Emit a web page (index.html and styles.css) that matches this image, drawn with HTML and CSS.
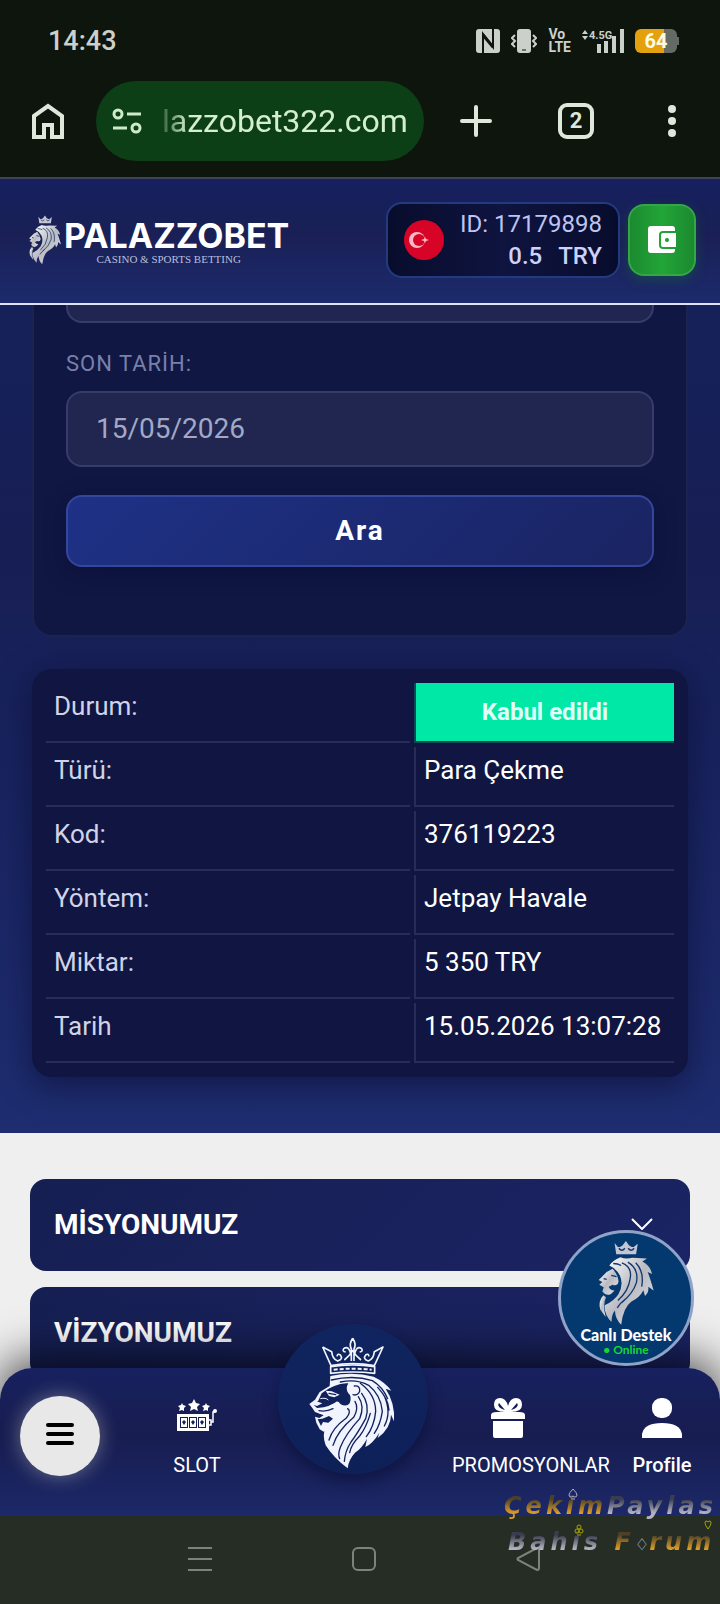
FILE: index.html
```
<!DOCTYPE html>
<html lang="tr">
<head>
    <meta charset="UTF-8">
    <meta name="viewport" content="width=device-width, initial-scale=1">
    <title>Palazzobet</title>
    <link rel="stylesheet" href="styles.css">
</head>
<body>
    <svg class="defs" aria-hidden="true">
        <defs>
            <linearGradient id="silver" x1="0" y1="0" x2="1" y2="1">
                <stop offset="0" stop-color="#ffffff"/>
                <stop offset="0.5" stop-color="#b9bac2"/>
                <stop offset="1" stop-color="#e8e8ee"/>
            </linearGradient>
        </defs>
        <symbol id="lion" viewBox="715 235 175 260">
            <path fill="#c3c6d2" d="M768 244l10 12 6 0 8-4 10-14 10 14 8 4 6 0 12-10-5 32h-60z"/>
            <path class="cut" d="M781 260q9 12 18 0M809 260q9 12 18 0"/>
            <path fill="url(#silver)" d="M752 312Q765 294 786 287Q800 294 822 289L866 291L852 300Q876 312 881 338L868 332Q876 352 886 388L870 376Q872 394 860 404L855 387Q845 408 818 422Q794 440 788 491Q770 474 769 448Q758 462 759 483Q736 460 738 432Q766 420 780 398Q796 370 784 342Q772 320 752 312Z"/>
            <path fill="url(#silver)" d="M762 322L744 332L720 356L731 362L722 370L735 378L731 391Q742 406 757 398L768 388Q754 386 750 376L762 370Q778 376 780 360Q778 340 762 322Z"/>
            <path fill="url(#silver)" d="M734 402Q717 420 725 446L741 468Q731 430 742 408Z"/>
            <path class="cut" d="M790 304Q822 316 815 352Q810 390 778 418M808 302Q842 322 834 364Q824 396 790 424M832 304Q858 330 850 376M776 440Q784 426 800 414M758 342L774 346M735 352L744 354M764 306Q778 306 788 312"/>
        </symbol>
    </svg>

    <!-- status bar -->
    <div class="status">
        <span class="clock">14:43</span>
        <div class="status-icons">
            <svg width="24" height="24" viewBox="0 0 24 24">
                <rect width="24" height="24" rx="3" fill="#ccd0cb"/>
                <path d="M7 24V5l10 13V0" fill="none" stroke="#0d150c" stroke-width="2"/>
                <path d="M7 6l10 12" stroke="#0d150c" stroke-width="3"/>
            </svg>
            <svg width="26" height="24" viewBox="0 0 26 24">
                <rect x="6" width="14" height="24" rx="3" fill="#ccd0cb"/>
                <path d="M11 21h4" stroke="#0d150c"/>
                <path d="M4 6L1 9l3 3-3 3 3 3M22 6l3 3-3 3 3 3-3 3" fill="none" stroke="#ccd0cb" stroke-width="2"/>
            </svg>
            <span class="volte">Vo<br>LTE</span>
            <svg class="signal" width="42" height="24" viewBox="0 0 42 24">
                <path d="M0 5l3-4 3 4zM0 7h6l-3 4zM15 15h4v9h-4zM22 12h4v12h-4zM30 7h4v17h-4zM38 0h4v24h-4z" fill="#ccd0cb"/>
                <text x="7" y="10">4.5G</text>
            </svg>
            <span class="battery">64</span>
        </div>
    </div>

    <!-- browser bar -->
    <div class="browser">
        <button class="home" aria-label="Ana sayfa">
            <svg width="32" height="36" viewBox="0 0 32 36"><path d="M2 13L16 3l14 10v21H20V22h-8v12H2z"/></svg>
        </button>
        <label class="address">
            <svg width="30" height="26" viewBox="0 0 30 26">
                <circle cx="6" cy="6" r="4"/><circle cx="24" cy="20" r="4"/>
                <path d="M15 6h14M1 20h14"/>
            </svg>
            <input type="text" value="lazzobet322.com" aria-label="Adres">
        </label>
        <button class="new-tab" aria-label="Yeni sekme">
            <svg width="32" height="32" viewBox="0 0 32 32"><path d="M16 2v28M2 16h28" stroke-linecap="round"/></svg>
        </button>
        <button aria-label="Sekmeler"><span class="tabs">2</span></button>
        <button aria-label="Menü">
            <svg class="dots" width="8" height="32" viewBox="0 0 8 32"><circle cx="4" cy="4" r="4"/><circle cx="4" cy="16" r="4"/><circle cx="4" cy="28" r="4"/></svg>
        </button>
    </div>

    <header class="header">
        <a href="#" class="logo">
            <svg width="34" height="50"><use href="#lion"/></svg>
            <span class="logo-text">
                <strong>PALAZZOBET</strong>
                <small>CASINO &amp; SPORTS BETTING</small>
            </span>
        </a>
        <div class="user">
            <svg width="40" height="40" viewBox="0 0 40 40">
                <circle cx="20" cy="20" r="20" fill="#d80428"/>
                <circle cx="13" cy="20" r="8" fill="#f7b9c6"/>
                <circle cx="15" cy="20" r="6" fill="#d80428"/>
                <path d="M17 20l3-1 1-2 1 2 3 1-3 1-1 2-1-2z" fill="#f7b9c6"/>
            </svg>
            <div class="user-info">
                <span>ID: 17179898</span>
                <b>0.5 <i>TRY</i></b>
            </div>
        </div>
        <button class="wallet" aria-label="Cüzdan">
            <svg width="28" height="28" viewBox="0 0 28 28">
                <path fill="#fff" d="M3 0h21q3 0 3 3v2H15q-4 0-4 4v10q0 4 4 4h12v1q0 3-3 3H3q-3 0-3-3V3q0-3 3-3z"/>
                <path fill="#fff" d="M15 7h13v14H15q-2 0-2-2V9q0-2 2-2z"/>
                <circle cx="19" cy="14" r="2" fill="#1f9a33"/>
            </svg>
        </button>
    </header>

    <main class="main">
        <form class="filter">
            <input type="text" aria-label="Başlangıç tarihi">
            <label for="end">SON TARİH:</label>
            <input type="text" id="end" value="15/05/2026">
            <button type="button">Ara</button>
        </form>
        <div class="result">
            <table>
                <tr><th>Durum:</th><td class="ok">Kabul edildi</td></tr>
                <tr><th>Türü:</th><td>Para Çekme</td></tr>
                <tr><th>Kod:</th><td>376119223</td></tr>
                <tr><th>Yöntem:</th><td>Jetpay Havale</td></tr>
                <tr><th>Miktar:</th><td>5 350 TRY</td></tr>
                <tr><th>Tarih</th><td>15.05.2026 13:07:28</td></tr>
            </table>
        </div>
    </main>

    <section class="about">
        <button class="fold">MİSYONUMUZ
            <svg width="22" height="12" viewBox="0 0 22 12"><path d="M1 1l10 10L21 1"/></svg>
        </button>
        <button class="fold">VİZYONUMUZ</button>
        <a href="#" class="support">
            <svg width="58" height="86"><use href="#lion"/></svg>
            <b>Canlı Destek</b>
            <span>• Online</span>
        </a>
    </section>

    <nav class="nav">
        <button class="menu" aria-label="Menü">
            <svg width="28" height="22" viewBox="0 0 28 22"><path d="M2 2h24M2 11h24M2 20h24"/></svg>
        </button>
        <a href="#" class="item">
            <svg width="40" height="40" viewBox="3 0 40 40">
                <path d="M20 1l2 4 4 1-3 3 1 4-4-2-4 2 1-4-3-3 4-1zM8 5l1 2 3 1-2 2v3l-2-1-3 1 1-3-2-2 3-1zM32 5l1 2 3 1-2 2v3l-2-1-3 1 1-3-2-2 3-1z"/>
                <path fill-rule="evenodd" d="M3 16h32v17H3zM6 19v11h8V19zM15 19v11h8V19zM24 19v11h8V19z"/>
                <path d="M7 20h6v9H7zM16 20h6v9h-6zM25 20h6v9h-6z"/>
                <path class="mark" d="M8 24l2-2 2 2-2 3zM17 24l2-2 2 2-2 3zM26 24l2-2 2 2-2 3z"/>
                <path d="M35 22h2v5h-2M37 24h2V14h2" fill="none" stroke="#fff" stroke-width="1.5"/>
                <circle cx="41" cy="13" r="2"/>
            </svg>
            <span>SLOT</span>
        </a>
        <a href="#" class="crest" aria-label="Ana sayfa">
            <svg viewBox="53 38 450 450">
                <g fill="none" stroke="#f1f4ff" stroke-width="5" stroke-linejoin="round">
                    <path d="M187 107l25 56q65-12 130 0l26-56-26 14q-2 22-18 28-18-6-8-18 8-6 10 4M187 107l27 14q2 22 18 28 18-6 8-18-8-6-10 4"/>
                    <path d="M277 81q-12 18-4 32v36M277 81q12 18 4 32v36M272 132q-6-32-22-20-5 8 6 10M282 132q6-32 22-20 5 8-6 10M252 146q14-10 25-28 11 18 25 28"/>
                    <path d="M211 166q66-10 132 0v20q-66-8-132 0z"/>
                </g>
                <path d="M220 175q57-6 114 0" fill="none" stroke="#f1f4ff" stroke-width="6" stroke-dasharray="12 6"/>
                <path fill="#f1f4ff" d="M210 194Q278 180 340 196Q374 212 393 238L376 232Q405 276 401 330L392 310Q392 350 352 380L357 364Q338 396 315 407L320 382Q304 412 284 424Q264 446 262 471Q220 440 196 402Q184 370 197 344L202 350L190 361L178 354L168 334L164 316L177 320L190 312L164 302L156 290L147 278L164 265L178 242L208 224Z"/>
                <g class="line">
                    <path d="M213 206Q280 190 336 208Q366 226 382 262M240 212Q290 202 325 222Q362 252 366 300Q360 340 342 366M300 216Q346 250 346 300Q342 344 318 376M304 246Q330 280 316 322Q292 366 272 392Q254 420 252 450M294 256Q314 284 298 322Q256 368 240 408Q232 430 238 442M284 270Q296 290 280 318Q232 358 218 402M262 292Q274 300 258 320Q216 350 206 386M330 306Q318 348 298 374Q272 400 268 424M372 254Q394 304 372 344M352 228Q384 262 386 296"/>
                    <path d="M282 224Q300 222 298 240Q292 254 278 250"/>
                </g>
                <path class="face" d="M184 246Q206 230 222 224Q244 214 264 216Q254 232 264 246Q276 256 268 276Q258 288 240 278Q232 266 224 274Q206 284 190 288L170 290L160 280L174 268Z"/>
                <path class="face" d="M172 324L186 322 206 314 218 322 204 334 188 332 182 344z"/>
                <path fill="#f1f4ff" d="M196 238L214 240 238 250 222 258 206 254zM150 277L168 270 186 276 170 284z"/>
                <path d="M180 262Q196 258 204 266M172 294Q196 300 216 288M178 306Q202 308 222 294" fill="none" stroke="#f1f4ff" stroke-width="3"/>
                <path class="line" d="M176 298Q198 302 218 292M206 246L226 250"/>
            </svg>
        </a>
        <a href="#" class="item promo">
            <svg width="40" height="40" viewBox="0 0 40 40">
                <path d="M17 14Q6 14 6 7T12 0t8 8q2-8 8-8t6 7-11 7h8q6 0 6 3v4H3v-4q0-3 6-3zM5 23h30v15q0 2-2 2H7q-2 0-2-2z"/>
                <path class="mark" d="M17 12L11 5Q8 9 17 12zM23 12l6-7q3 4-6 7z"/>
            </svg>
            <span>PROMOSYONLAR</span>
        </a>
        <a href="#" class="item profile">
            <svg width="40" height="40" viewBox="0 0 40 40"><rect x="10" width="20" height="20" rx="9"/><path d="M0 40v-4q2-11 20-11t20 11v4z"/></svg>
            <span>Profile</span>
        </a>
    </nav>

    <footer class="system">
        <button aria-label="Son uygulamalar"><svg width="24" height="24" viewBox="0 0 24 24"><path d="M0 1h24M0 12h24M0 23h24"/></svg></button>
        <button aria-label="Ana ekran"><svg width="24" height="24" viewBox="0 0 24 24"><rect x="1" y="1" width="22" height="22" rx="5"/></svg></button>
        <button aria-label="Geri"><svg width="24" height="24" viewBox="0 0 24 24"><path d="M21 1L2 11q-1 1 0 2l19 10q2 0 2-2V3q0-2-2-2z"/></svg></button>
        <div class="forum">
            <p><span class="gold">Çekim</span><span class="steel">Paylas</span></p>
            <p><span class="steel">Bahis</span> <span class="gold">F</span><em>♢</em><span class="gold">rum</span></p>
            <svg class="spade" width="10" height="12" viewBox="0 0 10 12"><path d="M5 1Q1 5 1 7t2 2 2-1q0 1 2 1t2-2-4-6zM3 11h4"/></svg>
            <svg class="club" width="10" height="12" viewBox="0 0 10 12"><circle cx="5" cy="3" r="2"/><circle cx="3" cy="7" r="2"/><circle cx="7" cy="7" r="2"/><path d="M3 11h4"/></svg>
            <svg class="heart" width="8" height="10" viewBox="0 0 8 10"><path d="M4 9Q1 5 1 3t1-2 2 1q1-1 2-1t1 2-3 6z"/></svg>
        </div>
    </footer>
</body>
</html>
```
FILE: styles.css
```
*{
    box-sizing: border-box;
}
body{
    margin: 0;
    font-family: Roboto, "Liberation Sans", sans-serif;
    font-size: 26px;
    color: #ffffff;
    background-color: #252d25;
}
button, input{
    margin: 0;
    padding: 0;
    border: none;
    background: none;
    font-family: inherit;
    color: inherit;
}
a{
    text-decoration: none;
    color: inherit;
}
i, em{
    font-style: normal;
}
.defs{
    position: absolute;
    width: 0;
    height: 0;
}
.cut{
    fill: none;
    stroke: #10366c;
    stroke-width: 4px;
}

/* status bar */
.status{
    display: flex;
    justify-content: space-between;
    height: 81px;
    padding: 0 43px 0 48px;
    align-items: center;
    background-color: #0d150c;
    color: #ccd0cb;
}
.clock{
    font-size: 27px;
    font-weight: 500;
}
.status-icons{
    display: flex;
    align-items: center;
    gap: 11px;
}
.volte{
    font-size: 14px;
    line-height: 13px;
    font-weight: 700;
}
.signal text{
    font-size: 11px;
    font-weight: 700;
    fill: #ccd0cb;
}
.battery{
    position: relative;
    width: 42px;
    height: 24px;
    border-radius: 6px;
    background: linear-gradient(90deg, #e5a00d 68%, #646a64 68%);
    color: #fffbe0;
    font-size: 20px;
    line-height: 24px;
    font-weight: 700;
    text-align: center;
}
.battery:after{
    content: '';
    position: absolute;
    left: 42px;
    top: 8px;
    width: 2px;
    height: 8px;
    background-color: #646a64;
}

/* browser bar */
.browser{
    display: grid;
    grid-template-columns: 96px minmax(0, 1fr) 104px 96px 96px;
    align-items: center;
    height: 98px;
    padding-bottom: 16px;
    background-color: #0d150c;
    border-bottom: 2px solid #3d4458;
    color: #dfe6da;
}
.browser button{
    display: flex;
    justify-content: center;
}
.browser svg{
    fill: none;
    stroke: #dfe6da;
    stroke-width: 4px;
}
.browser .dots{
    fill: #dfe6da;
    stroke: none;
}
.address{
    display: flex;
    align-items: center;
    gap: 20px;
    height: 80px;
    padding: 0 16px;
    border-radius: 40px;
    background-color: #0d3f17;
}
.browser .address svg{
    flex: none;
    stroke: #cdebc8;
    stroke-width: 3px;
}
.address input{
    flex: 1;
    min-width: 0;
    font-size: 32px;
    color: #d3efce;
    -webkit-mask-image: linear-gradient(90deg, rgba(0,0,0,.2), #000 26px);
    mask-image: linear-gradient(90deg, rgba(0,0,0,.2), #000 26px);
}
.tabs{
    width: 36px;
    height: 36px;
    border: 4px solid #dfe6da;
    border-radius: 9px;
    font-size: 22px;
    line-height: 28px;
    font-weight: 700;
}

/* site header */
.header{
    display: flex;
    align-items: center;
    height: 126px;
    padding: 0 24px 2px 28px;
    border-bottom: 2px solid #dfe3f7;
    background: linear-gradient(#16205f, #1a2056 45%, #1c2a6c);
}
.logo{
    display: flex;
    align-items: center;
    gap: 2px;
    margin-right: auto;
}
.logo-text{
    display: flex;
    flex-direction: column;
    align-items: center;
    padding-top: 4px;
}
.logo-text strong{
    font-family: Inter, sans-serif;
    font-size: 34px;
    line-height: 34px;
    font-weight: 700;
}
.logo-text small{
    padding-right: 16px;
    font-family: "Liberation Serif", serif;
    font-size: 11px;
    line-height: 12px;
    color: #b9bfdc;
}
.user{
    display: flex;
    align-items: center;
    gap: 16px;
    height: 76px;
    padding: 0 16px;
    border: 2px solid #223a80;
    border-radius: 16px;
    background: linear-gradient(90deg, #080c2c, #0f1440 50%, #080c2c);
}
.user-info{
    display: flex;
    flex-direction: column;
    font-size: 24px;
    line-height: 32px;
    text-align: right;
    color: #bcc4f2;
}
.user-info b{
    font-weight: 500;
    color: #ccd2fa;
}
.user-info i{
    margin-left: 10px;
}
.wallet{
    display: flex;
    align-items: center;
    justify-content: center;
    width: 68px;
    height: 72px;
    margin-left: 8px;
    border: 2px solid #36a548;
    border-radius: 16px;
    background: linear-gradient(90deg, #1b8a2f, #22a537 50%, #1b8a2f);
    box-shadow: 0 4px 12px rgba(20,110,50,.4);
}

/* search form */
.main{
    padding: 0 32px 56px;
    background: linear-gradient(#15215a, #171e54 30%, #18225c 50%, #1e2d70);
    overflow: hidden;
}
.filter{
    display: flex;
    flex-direction: column;
    margin-top: -80px;
    padding: 20px 32px 68px;
    border: 2px solid #1b2353;
    border-radius: 20px;
    background-color: #101743;
}
.filter input{
    height: 76px;
    padding: 0 28px 2px;
    border: 2px solid #363d6b;
    border-radius: 16px;
    background-color: #20264f;
    font-size: 28px;
    color: #a3a8c6;
}
.filter label{
    margin: 26px 0 12px;
    font-size: 22px;
    line-height: 30px;
    letter-spacing: 1px;
    color: #7880ab;
}
.filter button{
    height: 72px;
    margin-top: 28px;
    padding-bottom: 2px;
    border: 2px solid #34479c;
    border-radius: 16px;
    background: linear-gradient(135deg, #1e3186, #1a2462);
    box-shadow: 0 6px 20px rgba(8,12,50,.5);
    font-size: 28px;
    font-weight: 700;
    letter-spacing: 2px;
}

/* result table */
.result{
    margin-top: 32px;
    padding: 10px;
    border-radius: 20px;
    background-color: #101641;
    box-shadow: 0 8px 32px rgba(8,12,45,.6);
}
.result table{
    width: 100%;
    border-spacing: 4px;
    line-height: 30px;
}
.result th, .result td{
    height: 60px;
    padding: 8px;
    vertical-align: top;
    text-align: left;
    font-weight: 400;
    white-space: nowrap;
    border-bottom: 2px solid #272d57;
}
.result th{
    color: #d0d3e8;
}
.result td{
    width: 260px;
    border-left: 2px solid #272d57;
}
.result .ok{
    vertical-align: middle;
    text-align: center;
    font-size: 24px;
    font-weight: 700;
    color: #e0fff6;
    background-color: #00e8a6;
    background-clip: padding-box;
    border-color: #0d4857;
}

/* about */
.about{
    position: relative;
    display: flex;
    flex-direction: column;
    gap: 16px;
    padding: 46px 30px 21px;
    background-color: #efefef;
}
.fold{
    display: flex;
    align-items: center;
    justify-content: space-between;
    height: 92px;
    padding: 0 37px 2px 24px;
    border-radius: 16px;
    background: linear-gradient(135deg, #161f52, #1b2464);
    font-size: 28px;
    font-weight: 700;
}
.fold svg{
    fill: none;
    stroke: #ffffff;
    stroke-width: 2px;
}
.support{
    position: absolute;
    z-index: 2;
    right: 26px;
    bottom: 34px;
    display: flex;
    flex-direction: column;
    align-items: center;
    width: 136px;
    height: 136px;
    padding-top: 7px;
    border: 3px solid #8fa2c8;
    border-radius: 50%;
    background-color: #04396f;
    font-family: Lato, sans-serif;
}
.support b{
    font-size: 16px;
    line-height: 17px;
    font-weight: 900;
}
.support span{
    font-size: 12px;
    line-height: 14px;
    font-weight: 700;
    color: #14d831;
}

/* bottom nav */
.nav{
    position: relative;
    display: grid;
    grid-template-columns: 120fr 154fr 158fr 152fr 136fr;
    align-items: start;
    justify-items: center;
    height: 148px;
    margin-top: -32px;
    padding-top: 28px;
    border-radius: 32px 32px 0 0;
    background: linear-gradient(#17215f, #171d50 45%, #1c2868);
    box-shadow: 0 -8px 48px rgba(0,0,0,.75);
    font-size: 20px;
}
.menu{
    display: flex;
    align-items: center;
    justify-content: center;
    width: 80px;
    height: 80px;
    padding-bottom: 4px;
    border-radius: 50%;
    background-color: #e8e8e8;
    box-shadow: 0 0 20px rgba(232,232,220,.4);
}
.menu svg{
    fill: none;
    stroke: #000000;
    stroke-width: 4px;
    stroke-linecap: round;
    overflow: visible;
}
.item{
    display: flex;
    flex-direction: column;
    align-items: center;
    gap: 15px;
    padding-top: 2px;
    line-height: 24px;
}
.item svg{
    fill: #ffffff;
    overflow: visible;
}
.item .mark{
    fill: #171e54;
}
.promo{
    width: 112px;
}
.promo span{
    align-self: flex-start;
    white-space: nowrap;
}
.profile{
    margin-left: 20px;
    font-weight: 500;
}
.crest{
    width: 150px;
    height: 150px;
    margin-top: -72px;
    border-radius: 50%;
    background: linear-gradient(#10245f, #0e2058);
    box-shadow: 0 8px 14px rgba(6,12,50,.5);
}
.crest .line{
    fill: none;
    stroke: #10225c;
    stroke-width: 4px;
    stroke-linecap: round;
}
.crest .face{
    fill: #10225c;
}

/* system bar */
.system{
    position: relative;
    display: flex;
    justify-content: center;
    height: 88px;
    padding-left: 8px;
    background-color: #252d25;
}
.system svg{
    fill: none;
    stroke: #7c837b;
    stroke-width: 2px;
}
.system button{
    width: 164px;
}
.forum{
    position: absolute;
    right: 0;
    top: -28px;
    width: 216px;
    font-family: "DejaVu Sans", sans-serif;
    font-size: 24px;
    line-height: 36px;
    font-weight: 700;
    letter-spacing: 4px;
    white-space: nowrap;
}
.forum p{
    margin: 0;
}
.forum p + p{
    padding-left: 4px;
}
.forum span{
    font-style: italic;
    color: transparent;
    -webkit-background-clip: text;
    background-clip: text;
}
.forum .gold{
    background-image: linear-gradient(#4d4028 25%, #d99c27 75%);
}
.forum .steel{
    background-image: linear-gradient(#3a3d50 25%, #b4b4c0 75%);
}
.forum em{
    font-weight: 400;
    font-size: 16px;
    letter-spacing: 0;
    color: #d9d9d9;
}
.forum svg{
    position: absolute;
    stroke-width: 1px;
}
.forum .spade{
    left: 64px;
    top: 0;
    stroke: #aab0cc;
}
.forum .club{
    left: 70px;
    top: 36px;
    stroke: #a7a500;
}
.forum .heart{
    right: 8px;
    top: 32px;
    stroke: #a7a500;
}
```
